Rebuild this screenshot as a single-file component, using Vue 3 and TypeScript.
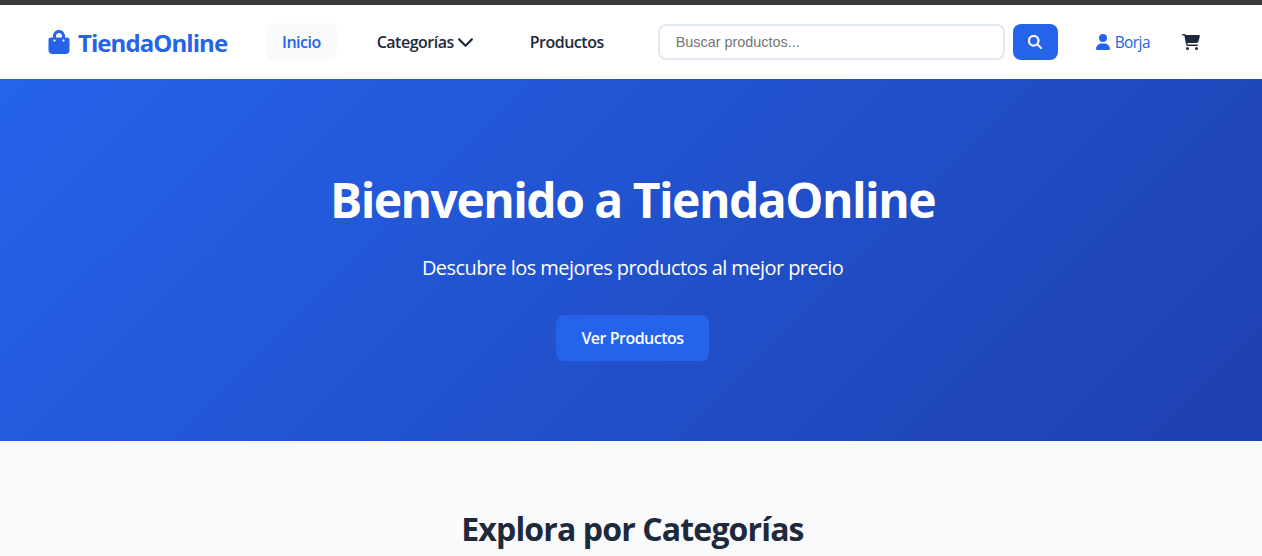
<script setup lang="ts">
const links = [
  { label: 'Inicio', active: true },
  { label: 'Categorías', caret: true },
  { label: 'Productos' },
]
</script>

<template>
  <div class="page">
    <header class="navbar">
      <a class="logo">
        <svg class="logo-icon" viewBox="0 0 448 512"><path d="M352 160v-32C352 57.42 294.579 0 224 0 153.42 0 96 57.42 96 128v32H48c-26.5 0-48 21.5-48 48v224c0 44.183 35.817 80 80 80h288c44.183 0 80-35.817 80-80V208c0-26.5-21.5-48-48-48h-48zm-192-32c0-35.29 28.71-64 64-64s64 28.71 64 64v32H160v-32zm160 120c-13.255 0-24-10.745-24-24s10.745-24 24-24 24 10.745 24 24-10.745 24-24 24zm-192 0c-13.255 0-24-10.745-24-24s10.745-24 24-24 24 10.745 24 24-10.745 24-24 24z" /></svg>
        <span>TiendaOnline</span>
      </a>
      <nav class="links">
        <a v-for="l in links" :key="l.label" class="link" :class="{ active: l.active }">
          {{ l.label }}
          <svg v-if="l.caret" class="caret" viewBox="0 0 512 512"><path d="M233.4 406.6c12.5 12.5 32.8 12.5 45.3 0l192-192c12.5-12.5 12.5-32.8 0-45.3s-32.8-12.5-45.3 0L256 338.7 86.6 169.4c-12.5-12.5-32.8-12.5-45.3 0s-12.5 32.8 0 45.3l192 192z" /></svg>
        </a>
      </nav>
      <form class="search" @submit.prevent>
        <input class="search-input" type="text" placeholder="Buscar productos..." />
        <button class="search-btn" type="submit" aria-label="Buscar">
          <svg viewBox="0 0 512 512"><path d="M416 208c0 45.9-14.9 88.3-40 122.7L502.6 457.4c12.5 12.5 12.5 32.8 0 45.3s-32.8 12.5-45.3 0L330.7 376c-34.4 25.2-76.8 40-122.7 40C93.1 416 0 322.9 0 208S93.1 0 208 0S416 93.1 416 208zM208 352a144 144 0 1 0 0-288 144 144 0 1 0 0 288z" /></svg>
        </button>
      </form>
      <div class="actions">
        <a class="user">
          <svg viewBox="0 0 448 512"><path d="M224 256A128 128 0 1 0 224 0a128 128 0 1 0 0 256zm-45.7 48C79.8 304 0 383.8 0 482.3C0 498.7 13.3 512 29.7 512H418.3c16.4 0 29.7-13.3 29.7-29.7C448 383.8 368.2 304 269.7 304H178.3z" /></svg>
          Borja
        </a>
        <a class="cart" aria-label="Carrito">
          <svg viewBox="0 0 576 512"><path d="M0 24C0 10.7 10.7 0 24 0H69.5c22 0 41.5 12.8 50.6 32h411c26.3 0 45.5 25 38.6 50.4l-41 152.3c-8.5 31.4-37 53.3-69.5 53.3H170.7l5.4 28.5c2.2 11.3 12.1 19.5 23.6 19.5H488c13.3 0 24 10.7 24 24s-10.7 24-24 24H199.7c-34.6 0-64.3-24.6-70.7-58.5L77.4 54.5c-.7-3.8-4-6.5-7.9-6.5H24C10.7 48 0 37.3 0 24zM128 464a48 48 0 1 1 96 0 48 48 0 1 1 -96 0zm336-48a48 48 0 1 1 0 96 48 48 0 1 1 0-96z" /></svg>
        </a>
      </div>
    </header>

    <section class="hero">
      <h1>Bienvenido a TiendaOnline</h1>
      <p>Descubre los mejores productos al mejor precio</p>
      <a class="hero-btn">Ver Productos</a>
    </section>

    <section class="categories">
      <h2>Explora por Categorías</h2>
    </section>
  </div>
</template>

<style>
html, body {
  margin: 0;
  height: 100%;
  overflow: hidden;
}
</style>

<style scoped>
.page {
  height: 556px;
  overflow: hidden;
  border-top: 5px solid #3a3a3a;
  box-sizing: border-box;
  background: #f8fafc;
  font-family: "Open Sans", "Noto Sans", sans-serif;
  color: #1e293b;
}

.navbar {
  height: 74px;
  display: flex;
  align-items: center;
  padding: 0 48px;
  background: #fff;
}

.logo {
  flex: none;
  display: flex;
  align-items: center;
  gap: 8px;
  width: 218px;
  color: #2563eb;
  font-size: 24px;
  font-weight: 700;
  letter-spacing: -0.93px;
}
.logo-icon {
  width: 22px;
  height: 24px;
  fill: currentColor;
}

.links {
  flex: none;
  display: flex;
  gap: 24px;
  margin-bottom: 1px;
}
.link {
  display: flex;
  align-items: center;
  height: 37px;
  padding: 0 16px;
  border-radius: 8px;
  font-size: 16px;
  font-weight: 600;
  letter-spacing: -0.5px;
}
.link.active {
  background: #f8fafc;
  color: #2563eb;
}
.caret {
  width: 17px;
  height: 17px;
  margin-left: 3px;
  fill: currentColor;
}

.search {
  flex: none;
  display: flex;
  gap: 8px;
  margin-left: 38px;
}
.search-input {
  width: 347px;
  height: 36px;
  box-sizing: border-box;
  padding: 0 16px;
  border: 2px solid #e2e8f0;
  border-radius: 8px;
  outline: none;
  font-family: "Liberation Sans", Arial, sans-serif;
  font-size: 14.4px;
}
.search-btn {
  display: flex;
  align-items: center;
  justify-content: center;
  width: 45px;
  height: 36px;
  padding: 0;
  border: 0;
  border-radius: 8px;
  background: #2563eb;
  color: #fff;
}
.search-btn svg {
  width: 14px;
  height: 14px;
  fill: currentColor;
  stroke: currentColor;
  stroke-width: 14;
}

.actions {
  flex: none;
  display: flex;
  align-items: center;
  gap: 32px;
  margin-left: 38px;
}
.user {
  display: flex;
  align-items: center;
  gap: 5px;
  color: #2563eb;
  font-size: 15.5px;
  letter-spacing: -0.6px;
}
.user svg {
  width: 14px;
  height: 16px;
  fill: currentColor;
}
.cart svg {
  display: block;
  width: 18px;
  height: 16px;
  fill: #1e293b;
}

.hero {
  height: 362px;
  box-sizing: border-box;
  padding: 91px 0 0 3px;
  display: flex;
  flex-direction: column;
  align-items: center;
  background: linear-gradient(135deg, #2563eb, #1e40af);
  color: #fff;
}
.hero h1 {
  margin: 0 0 23px;
  font-size: 48px;
  line-height: 60px;
  font-weight: 700;
  letter-spacing: -1.53px;
}
.hero p {
  margin: 0 0 32px;
  font-size: 20px;
  line-height: 30px;
  letter-spacing: -0.56px;
}
.hero-btn {
  display: flex;
  align-items: center;
  padding: 0 25.5px;
  height: 46px;
  border-radius: 8px;
  background: #2563eb;
  font-size: 16px;
  font-weight: 600;
  letter-spacing: -0.5px;
}

.categories {
  padding: 64px 0 0 3px;
  text-align: center;
}
.categories h2 {
  margin: 0;
  font-size: 32px;
  line-height: 48px;
  font-weight: 700;
  letter-spacing: -0.86px;
}
</style>
